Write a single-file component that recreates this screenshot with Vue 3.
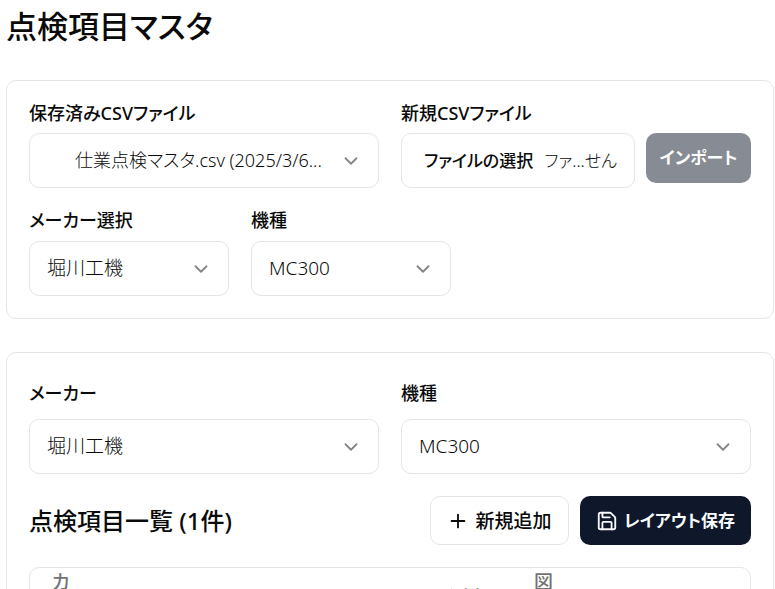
<script setup>
import { ref } from 'vue'

const savedFile = ref('仕業点検マスタ.csv (2025/3/6...')
const filterMaker = ref('堀川工機')
const filterModel = ref('MC300')
const maker = ref('堀川工機')
const model = ref('MC300')
</script>

<template>
  <main class="page">
    <h1 class="title">点検項目マスタ</h1>

    <section class="card">
      <div class="two-col">
        <div class="field">
          <label for="saved-file">保存済みCSVファイル</label>
          <div class="select select-indent">
            <select id="saved-file" v-model="savedFile">
              <option>仕業点検マスタ.csv (2025/3/6...</option>
            </select>
            <svg class="chevron" viewBox="0 0 24 24"><path d="m6 9 6 6 6-6" /></svg>
          </div>
        </div>
        <div class="field">
          <label for="new-file">新規CSVファイル</label>
          <div class="import-row">
            <label class="file" for="new-file">
              <input id="new-file" class="file-input" type="file" accept=".csv" />
              <span class="file-button">ファイルの選択</span>
              <span class="file-name">ファ...せん</span>
            </label>
            <button class="btn btn-muted" type="button" disabled>インポート</button>
          </div>
        </div>
      </div>
      <div class="filters">
        <div class="field filter">
          <label for="filter-maker">メーカー選択</label>
          <div class="select">
            <select id="filter-maker" v-model="filterMaker">
              <option>堀川工機</option>
            </select>
            <svg class="chevron" viewBox="0 0 24 24"><path d="m6 9 6 6 6-6" /></svg>
          </div>
        </div>
        <div class="field filter">
          <label for="filter-model">機種</label>
          <div class="select">
            <select id="filter-model" v-model="filterModel">
              <option>MC300</option>
            </select>
            <svg class="chevron" viewBox="0 0 24 24"><path d="m6 9 6 6 6-6" /></svg>
          </div>
        </div>
      </div>
    </section>

    <section class="card card-list">
      <div class="two-col">
        <div class="field field-loose">
          <label for="maker">メーカー</label>
          <div class="select">
            <select id="maker" v-model="maker">
              <option>堀川工機</option>
            </select>
            <svg class="chevron" viewBox="0 0 24 24"><path d="m6 9 6 6 6-6" /></svg>
          </div>
        </div>
        <div class="field field-loose">
          <label for="model">機種</label>
          <div class="select">
            <select id="model" v-model="model">
              <option>MC300</option>
            </select>
            <svg class="chevron" viewBox="0 0 24 24"><path d="m6 9 6 6 6-6" /></svg>
          </div>
        </div>
      </div>

      <div class="list-head">
        <h2>点検項目一覧 (1件)</h2>
        <div class="actions">
          <button class="btn btn-outline" type="button">
            <svg class="icon" viewBox="0 0 24 24"><path d="M5 12h14M12 5v14" /></svg>
            新規追加
          </button>
          <button class="btn btn-dark" type="button">
            <svg class="icon" viewBox="0 0 24 24">
              <path d="M15.2 3a2 2 0 0 1 1.4.6l3.8 3.8a2 2 0 0 1 .6 1.4V19a2 2 0 0 1-2 2H5a2 2 0 0 1-2-2V5a2 2 0 0 1 2-2z" />
              <path d="M17 21v-7a1 1 0 0 0-1-1H8a1 1 0 0 0-1 1v7M7 3v4a1 1 0 0 0 1 1h7" />
            </svg>
            レイアウト保存
          </button>
        </div>
      </div>

      <div class="table-wrap">
        <table>
          <thead>
            <tr>
              <th class="col-narrow" scope="col">カ</th>
              <th class="col-wide" scope="col"></th>
              <th class="col-measure" scope="col">測定</th>
              <th class="col-figure" scope="col">図</th>
              <th scope="col"></th>
            </tr>
          </thead>
        </table>
      </div>
    </section>
  </main>
</template>

<style>
body {
  margin: 0;
  background: #fff;
}
</style>

<style scoped>
* {
  box-sizing: border-box;
}
.page {
  height: 100vh;
  overflow: hidden;
  padding: 4px 1px 0 6px;
  color: #0a0a0a;
  font-family: "Noto Sans", "Noto Sans CJK JP", sans-serif;
  font-size: 19px;
  line-height: 28px;
  font-feature-settings: "palt";
}
.title {
  margin: 0 0 32px;
  font-size: 31px;
  line-height: 44px;
  font-weight: 500;
}
.card {
  border: 1px solid #e5e5e5;
  border-radius: 10px;
  padding: 18px 22px 22px;
}
.card-list {
  margin-top: 33px;
  padding-top: 26px;
}
.two-col {
  display: grid;
  grid-template-columns: 1fr 1fr;
  gap: 22px;
}
.field {
  display: flex;
  flex-direction: column;
  gap: 6px;
  min-width: 0;
}
.field-loose {
  gap: 12px;
}
.field > label {
  font-size: 18px;
  font-weight: 500;
}
.filters {
  display: flex;
  gap: 22px;
  margin-top: 18px;
}
.filter {
  gap: 7px;
  width: 200px;
}
.select {
  display: grid;
  align-items: center;
}
.select > * {
  grid-area: 1 / 1;
}
.select select {
  appearance: none;
  width: 100%;
  height: 55px;
  padding: 0 40px 2px 17px;
  border: 1px solid #e5e5e5;
  border-radius: 10px;
  background: #fff;
  color: inherit;
  font: inherit;
  font-size: 19px;
  font-weight: 300;
  font-feature-settings: inherit;
}
.select-indent select {
  padding-left: 45px;
  font-size: 18px;
}
.chevron {
  justify-self: end;
  width: 22px;
  height: 22px;
  margin-right: 17px;
  fill: none;
  stroke: #858585;
  stroke-width: 2;
  stroke-linecap: round;
  stroke-linejoin: round;
  pointer-events: none;
}
.import-row {
  display: flex;
  align-items: flex-start;
  gap: 11px;
}
.file {
  display: flex;
  flex: 1;
  align-items: center;
  gap: 11px;
  min-width: 0;
  height: 55px;
  padding: 0 12px 0 22px;
  border: 1px solid #e5e5e5;
  border-radius: 10px;
  font-size: 17px;
  white-space: nowrap;
}
.file-input {
  position: absolute;
  width: 1px;
  height: 1px;
  opacity: 0;
}
.file-button {
  font-weight: 500;
}
.file-name {
  font-weight: 300;
}
.btn {
  display: flex;
  align-items: center;
  justify-content: center;
  gap: 6px;
  height: 49px;
  padding: 0 16px;
  border: 1px solid transparent;
  border-radius: 10px;
  font: inherit;
  font-weight: 500;
  font-feature-settings: inherit;
  white-space: nowrap;
}
.btn-muted {
  height: 50px;
  min-width: 105px;
  padding: 0 12px;
  background: #878b93;
  color: #fcfcfc;
  font-size: 17px;
  font-weight: 700;
}
.btn-outline {
  min-width: 139px;
  border-color: #e5e5e5;
  background: #fff;
  color: #0a0a0a;
}
.btn-dark {
  min-width: 171px;
  padding: 0 14px;
  background: #0f172a;
  color: #f8fafc;
  font-size: 17px;
  font-weight: 700;
}
.icon {
  width: 22px;
  height: 22px;
  fill: none;
  stroke: currentColor;
  stroke-width: 2;
  stroke-linecap: round;
  stroke-linejoin: round;
}
.list-head {
  display: flex;
  align-items: center;
  justify-content: space-between;
  margin: 22px 0;
}
h2 {
  margin: 0;
  font-size: 24px;
  line-height: 36px;
  font-weight: 500;
}
.actions {
  display: flex;
  gap: 11px;
}
.table-wrap {
  border: 1px solid #e5e5e5;
  border-radius: 10px;
}
table {
  width: 100%;
  table-layout: fixed;
  border-collapse: collapse;
}
th {
  height: 56px;
  padding: 0;
  color: #737373;
  font-weight: 500;
  text-align: left;
  vertical-align: top;
}
.col-narrow {
  width: 59px;
  padding-left: 22px;
}
.col-wide {
  width: 50%;
}
.col-measure {
  width: 85px;
  padding-top: 16px;
}
.col-figure {
  width: 60px;
}
</style>
